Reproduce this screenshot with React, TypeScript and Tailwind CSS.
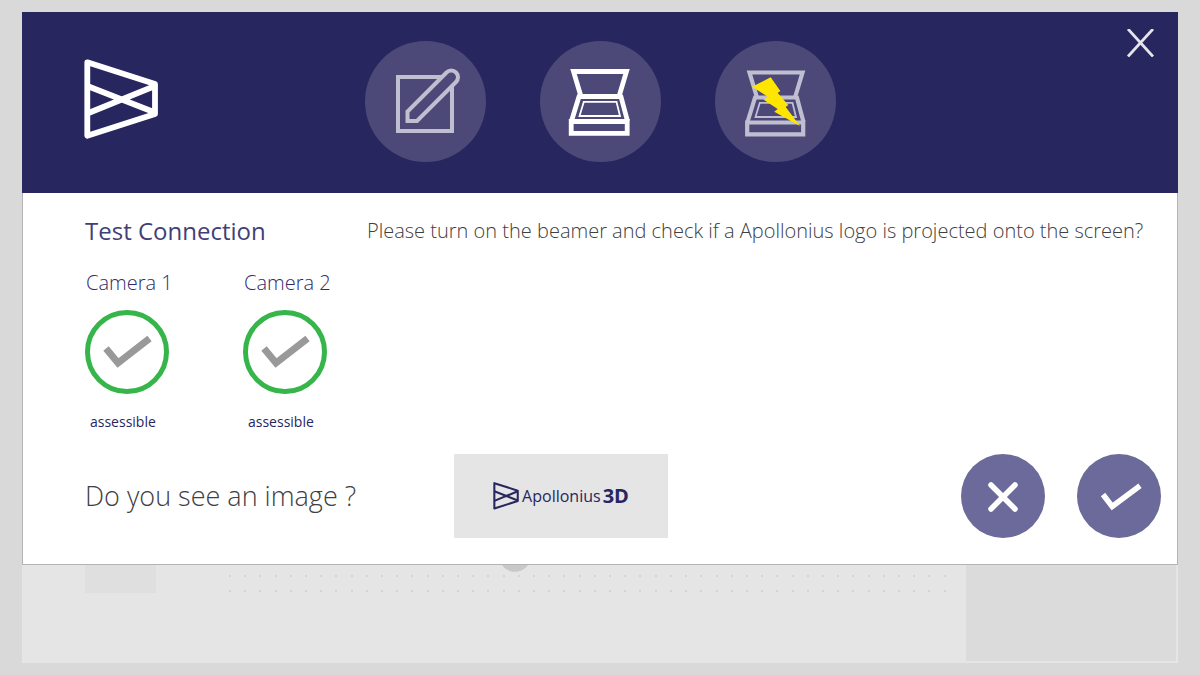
import { useState } from 'react';

const CAMERAS = [
  { id: 1, name: 'Camera 1', status: 'assessible' },
  { id: 2, name: 'Camera 2', status: 'assessible' },
];

const STEPS = [
  { id: 'edit', label: 'Edit' },
  { id: 'scan', label: 'Scanner' },
  { id: 'flash', label: 'Scanner flash' },
] as const;

type StepId = (typeof STEPS)[number]['id'];

function LogoMark({ className, strokeWidth }: { className: string; strokeWidth: number }) {
  return (
    <svg
      viewBox="0 0 74 81"
      className={className}
      fill="none"
      stroke="currentColor"
      strokeWidth={strokeWidth}
      strokeLinejoin="round"
      aria-hidden="true"
    >
      <path d="M3.3 3.3 71 25V55L3.3 76.7Z" />
      <path d="M3.3 27 71 53.5M3.3 54.5 71 27" />
    </svg>
  );
}

function EditIcon() {
  return (
    <svg viewBox="0 0 121 121" className="size-full text-[#c0bfd2]" fill="none" stroke="currentColor" strokeWidth="4" aria-hidden="true">
      <path d="M76 36H33V90H87V45" />
      <path d="M42.5 70.5V80H52L91 41A6.7 6.7 0 0 0 81.5 31.5Z" />
    </svg>
  );
}

function ScannerIcon({ flash = false }: { flash?: boolean }) {
  return (
    <svg
      viewBox="0 0 121 121"
      className={flash ? 'size-full text-[#c0bfd2]' : 'size-full text-white'}
      fill="none"
      stroke="currentColor"
      strokeWidth={flash ? 4.2 : 4.8}
      aria-hidden="true"
    >
      <g transform={flash ? 'translate(1 1)' : undefined}>
        <path d="M33.5 30.500H86.5L79 55.500H41Z" />
        <path d="M39.5 54 31.5 80M80.5 54 87.5 80" />
        <path d="M31.2 80.500H87.2V92.300H31.2Z" />
        <path strokeWidth="1.8" d="M43.8 60.800H76.5L80 75H39.5Z" />
      </g>
      {flash && (
        <path
          fill="#ffe600"
          stroke="none"
          d="M37 45.7 55.7 36.3 65.3 50 62.7 52 73.3 64 70.7 66 85 85 59.3 70.7 62.7 68 48.7 58.7 52.7 55.7Z"
        />
      )}
    </svg>
  );
}

export default function App() {
  const [step, setStep] = useState<StepId>('scan');
  const [open, setOpen] = useState(true);
  const [answer, setAnswer] = useState<boolean | null>(null);

  return (
    <div className="flex min-h-screen flex-col bg-[#d9d9d9] px-[22px] py-3 font-['Open_Sans','Noto_Sans',sans-serif]">
      {open && (
        <section aria-label="Test Connection" className="border-x border-b border-[#b4b4b4] bg-white">
          {/* Header: logo, steps, close */}
          <header className="-mx-px grid grid-cols-[1fr_auto_1fr] bg-[#28265f] pt-[29px] pb-[31px]">
            <div className="flex items-center pl-[62px] text-white">
              <LogoMark className="mb-1 h-[81px] w-[74px]" strokeWidth={5.8} />
            </div>
            <nav className="flex gap-[54px]">
              {STEPS.map((s) => (
                <button
                  key={s.id}
                  type="button"
                  aria-label={s.label}
                  aria-pressed={step === s.id}
                  onClick={() => setStep(s.id)}
                  className="size-[121px] rounded-full bg-[#4c4978]"
                >
                  {s.id === 'edit' ? <EditIcon /> : <ScannerIcon flash={s.id === 'flash'} />}
                </button>
              ))}
            </nav>
            <div className="-mt-3 flex items-start justify-end pr-6">
              <button type="button" aria-label="Close" onClick={() => setOpen(false)} className="text-[#e4e4ea]">
                <svg viewBox="0 0 28 28" className="size-7" fill="none" stroke="currentColor" strokeWidth="2.8" aria-hidden="true">
                  <path d="M2 0 27 27.500M27 0 2 27.500" />
                </svg>
              </button>
            </div>
          </header>

          {/* Camera status and instructions */}
          <div className="flex pt-5 pr-4 pl-[62px]">
            <div className="w-[282px] shrink-0">
              <h1 className="text-2xl leading-9 text-[#413f78]">Test Connection</h1>
              <div className="mt-5 flex gap-[74px]">
                {CAMERAS.map((camera) => (
                  <div key={camera.id} className="w-[84px]">
                    <h2 className="pl-px text-xl leading-7 font-light whitespace-nowrap text-[#2e2c6a]">{camera.name}</h2>
                    <div className="mt-[13px] size-[84px] rounded-full border-[5px] border-[#36b54a]">
                      <svg viewBox="0 0 74 74" className="size-full text-[#999]" fill="none" stroke="currentColor" strokeWidth="7" aria-hidden="true">
                        <path d="M16 33.5 28 48 59.5 23.5" />
                      </svg>
                    </div>
                    <p className="mt-4 pl-[5px] text-sm leading-6 text-[#28265f]">{camera.status}</p>
                  </div>
                ))}
              </div>
            </div>
            <p className="text-xl leading-9 font-light text-[#404042]">
              Please turn on the beamer and check if a Apollonius logo is projected onto the screen?
            </p>
          </div>

          {/* Confirmation row */}
          <div className="flex items-center pt-5 pr-4 pb-[26px] pl-[62px]">
            <p className="w-[369px] shrink-0 text-[27px] leading-10 font-light text-[#404042]">Do you see an image ?</p>
            <div className="flex h-[84px] w-[214px] items-center justify-center bg-[#e5e5e5] text-[#28265f]">
              <LogoMark className="mr-[3px] h-7 w-[26px]" strokeWidth={6} />
              <span className="text-base leading-6">Apollonius</span>
              <strong className="ml-0.5 text-xl leading-6 font-bold">3D</strong>
            </div>
            <div className="ml-auto flex gap-8">
              <button
                type="button"
                aria-label="No"
                aria-pressed={answer === false}
                onClick={() => setAnswer(false)}
                className="size-[84px] rounded-full bg-[#6b6a9a] text-white"
              >
                <svg viewBox="0 0 84 84" className="size-full" fill="none" stroke="currentColor" strokeWidth="5.5" strokeLinecap="round" aria-hidden="true">
                  <path d="M30 31 54 55M54 31 30 55" />
                </svg>
              </button>
              <button
                type="button"
                aria-label="Yes"
                aria-pressed={answer === true}
                onClick={() => setAnswer(true)}
                className="size-[84px] rounded-full bg-[#6b6a9a] text-white"
              >
                <svg viewBox="0 0 84 84" className="size-full" fill="none" stroke="currentColor" strokeWidth="5.5" aria-hidden="true">
                  <path d="M26 40.5 35.2 52.5 63 31.7" />
                </svg>
              </button>
            </div>
          </div>
        </section>
      )}

      {/* Workspace that stays visible below the dialog */}
      <div className="flex flex-1 bg-[#e5e5e5] pr-0.5 pb-0.5 pl-[63px]">
        <div className="h-7 w-[71px] bg-[#dfdfdf]" />
        <div className="relative mr-5 ml-[73px] flex-1 pt-2.5">
          <div className="flex flex-col gap-[13px]">
            {[0, 1].map((row) => (
              <div key={row} className="flex justify-between">
                {Array.from({ length: 48 }, (_, i) => (
                  <span key={i} className="size-0.5 bg-[#d4d4d4]" />
                ))}
              </div>
            ))}
          </div>
          <svg viewBox="0 0 26 8" className="absolute top-0 left-[273px] h-2 w-[26px] fill-[#c8c8c8]" aria-hidden="true">
            <path d="M0 0H26C20 9 6 9 0 0Z" />
          </svg>
        </div>
        <div className="w-[210px] shrink-0 bg-[#dbdbdb]" />
      </div>
    </div>
  );
}
